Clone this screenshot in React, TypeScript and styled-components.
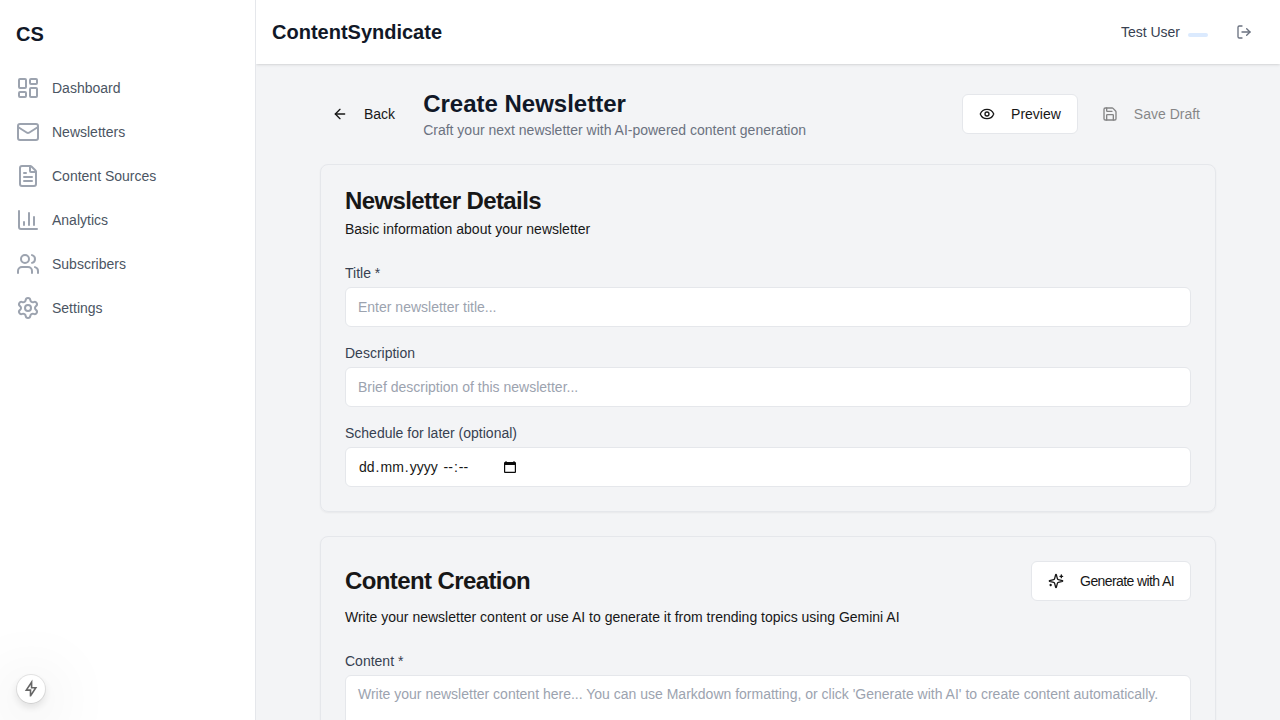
import React from "react";
import styled, { createGlobalStyle } from "styled-components";
import {
  ArrowLeft,
  Eye,
  FileText,
  LayoutDashboard,
  LogOut,
  Mail,
  Save,
  Settings,
  Users,
} from "lucide-react";

const GlobalStyle = createGlobalStyle`
  *, *::before, *::after { box-sizing: border-box; }
  body {
    margin: 0;
    overflow: hidden;
    font-family: "Liberation Sans", Arial, sans-serif;
    font-size: 14px;
    line-height: 20px;
    color: #171717;
  }
  h1, h2, h3, p { margin: 0; }
  button, input, textarea { font: inherit; color: inherit; letter-spacing: inherit; }
`;

const Shell = styled.div`
  display: flex;
  height: 100vh;
  overflow: hidden;
  background: #f3f4f6;
`;

const Sidebar = styled.aside`
  position: relative;
  z-index: 1;
  flex: 0 0 256px;
  padding: 20px 16px 0;
  background: #fff;
  border-right: 1px solid #e5e7eb;
`;

const Logo = styled.div`
  font-size: 20px;
  line-height: 28px;
  font-weight: 700;
  color: #111827;
`;

const Nav = styled.nav`
  display: flex;
  flex-direction: column;
  gap: 4px;
  margin-top: 20px;
`;

const NavItem = styled.a`
  display: flex;
  align-items: center;
  gap: 12px;
  height: 40px;
  color: #4b5563;
  svg { color: #9ca3af; }
`;

const Column = styled.div`
  flex: 1;
  min-width: 0;
  display: flex;
  flex-direction: column;
`;

const TopBar = styled.header`
  flex: 0 0 64px;
  display: flex;
  align-items: center;
  justify-content: space-between;
  padding: 0 16px;
  background: #fff;
  box-shadow: 0 1px 3px rgba(0, 0, 0, 0.1), 0 1px 2px -1px rgba(0, 0, 0, 0.1);
`;

const Brand = styled.h1`
  font-size: 20px;
  line-height: 28px;
  color: #111827;
`;

const Account = styled.div`
  display: flex;
  align-items: center;
  color: #374151;
`;

const PlanBadge = styled.span`
  width: 20px;
  height: 4px;
  margin: 5px 0 0 8px;
  border-radius: 4px;
  background: #dbeafe;
`;

const LogoutButton = styled.button`
  display: flex;
  margin-left: 16px;
  padding: 12px;
  border: 0;
  background: none;
  color: #6b7280;
`;

const Page = styled.main`
  width: 896px;
  margin: 0 auto;
  padding-top: 24px;
`;

const PageHeader = styled.div`
  display: flex;
  align-items: center;
  justify-content: space-between;
  margin-bottom: 24px;
`;

const Group = styled.div<{ $gap: number }>`
  display: flex;
  align-items: center;
  gap: ${(p) => p.$gap}px;
`;

const PageTitle = styled.h2`
  font-size: 24px;
  line-height: 32px;
  color: #111827;
`;

const Subtitle = styled.p`
  color: #6b7280;
`;

const Button = styled.button<{ $variant?: "outline" | "ghost" }>`
  display: flex;
  align-items: center;
  gap: 16px;
  height: 40px;
  padding: 0 ${(p) => (p.$variant === "ghost" ? 12 : 16)}px;
  border: ${(p) => (p.$variant === "outline" ? "1px solid #e5e7eb" : "0")};
  border-radius: 6px;
  background: ${(p) => (p.$variant === "outline" ? "#fff" : "transparent")};
  color: #171717;
  white-space: nowrap;
  &:disabled { opacity: 0.5; }
`;

const Card = styled.section`
  margin-bottom: 24px;
  padding: 24px;
  border: 1px solid #e5e7eb;
  border-radius: 8px;
  box-shadow: 0 1px 2px rgba(0, 0, 0, 0.05);
`;

const CardHeader = styled.div`
  display: flex;
  flex-direction: column;
  gap: 6px;
  margin-bottom: 24px;
`;

const CardTitle = styled.h3`
  display: flex;
  align-items: center;
  justify-content: space-between;
  font-size: 24px;
  line-height: 24px;
  letter-spacing: -0.6px;
  color: #171717;
  button { font-size: 14px; font-weight: 400; }
`;

const Fields = styled.div`
  display: flex;
  flex-direction: column;
  gap: 16px;
`;

const Field = styled.label`
  display: flex;
  flex-direction: column;
  gap: 4px;
  color: #374151;
`;

const Input = styled.input`
  height: 40px;
  padding: 8px 12px;
  border: 1px solid #e5e7eb;
  border-radius: 6px;
  background: #fff;
  &::placeholder { color: #9ca3af; opacity: 1; }
`;

const TextArea = styled.textarea`
  height: 300px;
  padding: 8px 12px;
  border: 1px solid #e5e7eb;
  border-radius: 6px;
  background: #fff;
  resize: none;
  &::placeholder { color: #9ca3af; opacity: 1; }
`;

const DateBox = styled.div`
  display: flex;
  align-items: center;
  height: 40px;
  padding: 0 12px;
  border: 1px solid #e5e7eb;
  border-radius: 6px;
  background: #fff;
  color: #171717;
  white-space: pre;
  svg { margin-left: 34px; }
`;

const DatePart = styled.span`
  padding: 0 1px;
`;

const FloatingButton = styled.button`
  position: fixed;
  z-index: 2;
  left: 17px;
  bottom: 17px;
  display: flex;
  align-items: center;
  justify-content: center;
  width: 28px;
  height: 28px;
  padding: 0;
  border: 0;
  border-radius: 50%;
  background: #fff;
  color: #666;
  box-shadow: 0 0 0 1px rgba(0, 0, 0, 0.09), 0 4px 10px rgba(0, 0, 0, 0.12),
    0 10px 64px rgba(0, 0, 0, 0.25);
`;

const ChartIcon = () => (
  <svg width="24" height="24" viewBox="0 0 24 24" fill="none" stroke="currentColor" strokeWidth="2" strokeLinecap="round" strokeLinejoin="round">
    <path d="M3 3v16a2 2 0 0 0 2 2h16M18 17V9M13 17V5M8 17v-3" />
  </svg>
);

const SparklesIcon = () => (
  <svg width="16" height="16" viewBox="0 0 24 24" fill="none" stroke="currentColor" strokeWidth="2" strokeLinecap="round" strokeLinejoin="round">
    <path d="M9.937 15.5A2 2 0 0 0 8.5 14.063l-6.135-1.582a.5.5 0 0 1 0-.962L8.5 9.936A2 2 0 0 0 9.937 8.5l1.582-6.135a.5.5 0 0 1 .963 0L14.063 8.5A2 2 0 0 0 15.5 9.937l6.135 1.581a.5.5 0 0 1 0 .964L15.5 14.063a2 2 0 0 0-1.437 1.437l-1.582 6.135a.5.5 0 0 1-.963 0z" />
    <path d="M20 3v4M22 5h-4M4 17v2M5 18H3" />
  </svg>
);

const CalendarIcon = () => (
  <svg width="14" height="14" viewBox="0 0 14 14" fill="#0a0a0a">
    <path d="M2.5 1h1v1h7V1h1v1h.5a1 1 0 0 1 1 1v9a1 1 0 0 1-1 1H2a1 1 0 0 1-1-1V3a1 1 0 0 1 1-1h.5zM2.2 5v6.8h9.6V5z" fillRule="evenodd" />
  </svg>
);

const BoltIcon = () => (
  <svg width="20" height="20" viewBox="0 0 20 20" fill="none" stroke="currentColor" strokeWidth="1.6" strokeLinejoin="miter">
    <path d="M10.6 3.2 5.3 11.1h4.2v5.7h.1l5.2-8h-4.2z" />
  </svg>
);

const navItems = [
  { label: "Dashboard", icon: LayoutDashboard },
  { label: "Newsletters", icon: Mail },
  { label: "Content Sources", icon: FileText },
  { label: "Analytics", icon: ChartIcon },
  { label: "Subscribers", icon: Users },
  { label: "Settings", icon: Settings },
];

export default function App() {
  return (
    <>
      <GlobalStyle />
      <Shell>
        <Sidebar>
          <Logo>CS</Logo>
          <Nav>
            {navItems.map(({ label, icon: Icon }) => (
              <NavItem key={label}>
                <Icon />
                {label}
              </NavItem>
            ))}
          </Nav>
        </Sidebar>
        <Column>
          <TopBar>
            <Brand>ContentSyndicate</Brand>
            <Account>
              Test User
              <PlanBadge />
              <LogoutButton aria-label="Log out">
                <LogOut size={16} />
              </LogoutButton>
            </Account>
          </TopBar>
          <Page>
            <PageHeader>
              <Group $gap={16}>
                <Button $variant="ghost">
                  <ArrowLeft size={16} />
                  Back
                </Button>
                <div>
                  <PageTitle>Create Newsletter</PageTitle>
                  <Subtitle>Craft your next newsletter with AI-powered content generation</Subtitle>
                </div>
              </Group>
              <Group $gap={8}>
                <Button $variant="outline">
                  <Eye size={16} />
                  Preview
                </Button>
                <Button disabled>
                  <Save size={16} />
                  Save Draft
                </Button>
              </Group>
            </PageHeader>
            <Card>
              <CardHeader>
                <CardTitle>Newsletter Details</CardTitle>
                <p>Basic information about your newsletter</p>
              </CardHeader>
              <Fields>
                <Field>
                  Title *
                  <Input placeholder="Enter newsletter title..." />
                </Field>
                <Field>
                  Description
                  <Input placeholder="Brief description of this newsletter..." />
                </Field>
                <Field>
                  Schedule for later (optional)
                  <DateBox>
                    <DatePart>dd</DatePart>.<DatePart>mm</DatePart>.<DatePart>yyyy</DatePart>
                    <span> </span>
                    <DatePart>--</DatePart>:<DatePart>--</DatePart>
                    <CalendarIcon />
                  </DateBox>
                </Field>
              </Fields>
            </Card>
            <Card>
              <CardHeader>
                <CardTitle>
                  Content Creation
                  <Button $variant="outline">
                    <SparklesIcon />
                    Generate with AI
                  </Button>
                </CardTitle>
                <p>Write your newsletter content or use AI to generate it from trending topics using Gemini AI</p>
              </CardHeader>
              <Field>
                Content *
                <TextArea placeholder="Write your newsletter content here... You can use Markdown formatting, or click 'Generate with AI' to create content automatically." />
              </Field>
            </Card>
          </Page>
        </Column>
      </Shell>
      <FloatingButton aria-label="Quick actions">
        <BoltIcon />
      </FloatingButton>
    </>
  );
}
